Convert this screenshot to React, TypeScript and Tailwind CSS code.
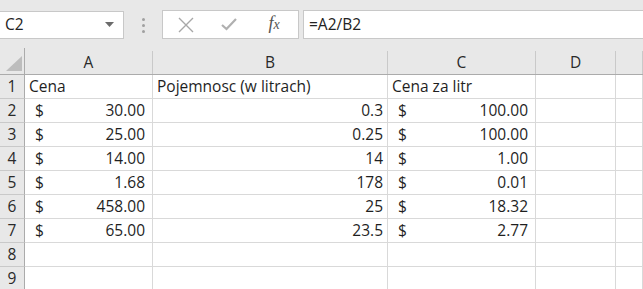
const font = { fontFamily: '"Open Sans", "Noto Sans", sans-serif' };

type Val = [string, string] | string;
type Row = { n: number; a?: Val; b?: string; c?: Val };

const rows: Row[] = [
  { n: 1, a: "Cena", b: "Pojemnosc (w litrach)", c: "Cena za litr" },
  { n: 2, a: ["$", "30.00"], b: "0.3", c: ["$", "100.00"] },
  { n: 3, a: ["$", "25.00"], b: "0.25", c: ["$", "100.00"] },
  { n: 4, a: ["$", "14.00"], b: "14", c: ["$", "1.00"] },
  { n: 5, a: ["$", "1.68"], b: "178", c: ["$", "0.01"] },
  { n: 6, a: ["$", "458.00"], b: "25", c: ["$", "18.32"] },
  { n: 7, a: ["$", "65.00"], b: "23.5", c: ["$", "2.77"] },
  { n: 8 },
  { n: 9 },
];

// numbers go right, text goes left, like excel does
function Cell({ v }: { v?: Val }) {
  if (Array.isArray(v)) {
    return (
      <div className="flex h-6 items-center justify-between border-r border-b border-[#d9d9d9] pl-[10px] pr-[7px] text-[15.5px] text-[#1f1f1f]">
        <span>{v[0]}</span>
        <span>{v[1]}</span>
      </div>
    );
  }
  const num = v !== undefined && !isNaN(Number(v));
  return (
    <div
      className={`flex h-6 items-center whitespace-nowrap border-r border-b border-[#d9d9d9] text-[15.5px] text-[#1f1f1f] ${
        num ? "justify-end pr-[4px]" : "pl-[4px]"
      }`}
    >
      {v}
    </div>
  );
}

export default function App() {
  return (
    <div className="h-[289px] w-[643px] overflow-hidden bg-white" style={font}>
      {/* formula bar */}
      <div className="flex h-12 items-start bg-[#e8e8e8] pt-[10px]">
        <div className="mt-px flex h-[28px] w-[124px] items-center justify-between border border-l-0 border-[#c8c8c8] bg-white pl-[5px] pr-[9px] text-[15.5px] text-[#222]">
          <span>C2</span>
          <svg width="9" height="6" viewBox="0 0 9 6">
            <polygon points="0,0 9,0 4.5,5" fill="#6b6b6b" />
          </svg>
        </div>
        <div className="flex w-[38px] flex-col items-center gap-[3px] pt-[8px]">
          <span className="h-[3px] w-[3px] rounded-full bg-[#a0a0a0]" />
          <span className="h-[3px] w-[3px] rounded-full bg-[#a0a0a0]" />
          <span className="h-[3px] w-[3px] rounded-full bg-[#a0a0a0]" />
        </div>
        <div className="flex h-[29px] w-[137px] items-center border border-[#c8c8c8] bg-white">
          <div className="flex w-[44px] justify-center pl-[2px]">
            <svg width="16" height="16" viewBox="0 0 16 16">
              <path d="M1 1 L15 15 M15 1 L1 15" stroke="#a8a8a8" strokeWidth="1.4" />
            </svg>
          </div>
          <div className="flex w-[44px] justify-center">
            <svg width="16" height="13" viewBox="0 0 16 13">
              <path d="M1 7 L5.5 11 L15 1" stroke="#b0b0b0" strokeWidth="2.2" fill="none" />
            </svg>
          </div>
          <div
            className="flex w-[46px] justify-center text-[18px] italic text-[#555]"
            style={{ fontFamily: '"Liberation Serif", serif' }}
          >
            <span className="-mt-[2px]">
              f<span className="text-[14px]">x</span>
            </span>
          </div>
        </div>
        <div className="ml-[4px] flex h-[29px] flex-1 items-center border border-r-0 border-[#c8c8c8] bg-white pl-[5px] text-[15.5px] text-[#222]">
          =A2/B2
        </div>
      </div>

      {/* grid */}
      <div className="grid grid-cols-[25px_128px_235px_148px_80px_1fr]">
        <div className="relative h-[27px] border-r border-b border-[#ababab] bg-[#e8e8e8]">
          <svg className="absolute right-[2px] bottom-[3px]" width="16" height="15" viewBox="0 0 16 15">
            <polygon points="16,0 16,15 0,15" fill="#bdbdbd" />
          </svg>
        </div>
        {["A", "B", "C", "D", ""].map((h, i) => (
          <div
            key={i}
            className="flex h-[27px] items-center justify-center border-b border-[#ababab] bg-[#e8e8e8] pt-[3px] text-[15.5px] text-[#2a2a2a]"
          >
            <div className="flex h-full w-full items-center justify-center border-r border-[#c9c9c9]">
              {h}
            </div>
          </div>
        ))}
        {rows.map((r) => (
          <div key={r.n} className="contents">
            <div className="flex h-6 items-center justify-center border-r border-b border-[#c9c9c9] border-r-[#ababab] bg-[#e8e8e8] text-[15.5px] text-[#2a2a2a]">
              {r.n}
            </div>
            <Cell v={r.a} />
            <Cell v={r.b} />
            <Cell v={r.c} />
            <Cell />
            <Cell />
          </div>
        ))}
      </div>
    </div>
  );
}
